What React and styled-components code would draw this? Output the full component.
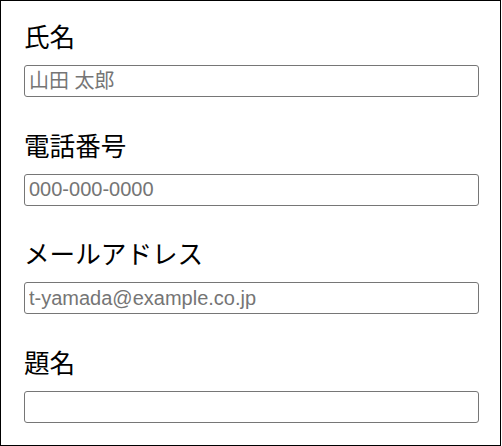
import React from "react";
import styled, { createGlobalStyle } from "styled-components";

const GlobalStyle = createGlobalStyle`
    html, body {
        margin: 0;
        padding: 0;
        background: #fff;
    }
`;

const Form = styled.form`
    box-sizing: border-box;
    width: 501px;
    height: 446px;
    border: 1px solid #000;
    padding: 19px 21px 0 23px;
    display: flex;
    flex-direction: column;
    gap: 31.67px;
    font-family: "Noto Sans CJK JP", "Liberation Sans", sans-serif;
`;

const Field = styled.div`
    display: flex;
    flex-direction: column;
    gap: 13px;
`;

const Label = styled.label`
    display: block;
    font-size: 25.6px;
    line-height: 32px;
    color: #000;
`;

const Input = styled.input`
    box-sizing: border-box;
    width: 100%;
    height: 32px;
    margin: 0;
    padding: 0 4px;
    border: 1px solid #767676;
    border-radius: 3px;
    background: #fff;
    font-family: "Liberation Sans", "Noto Sans CJK JP", sans-serif;
    font-size: 20px;
    color: #000;
    outline: none;

    &::placeholder {
        color: #757575;
        opacity: 1;
    }
`;

const fields = [
    { id: "name", label: "氏名", type: "text", placeholder: "山田 太郎" },
    { id: "tel", label: "電話番号", type: "tel", placeholder: "000-000-0000" },
    { id: "email", label: "メールアドレス", type: "email", placeholder: "t-yamada@example.co.jp" },
    { id: "subject", label: "題名", type: "text", placeholder: "" },
];

export default function App() {
    return (
        <>
            <GlobalStyle />
            <Form onSubmit={ e => e.preventDefault() }>
                { fields.map( f => (
                    <Field key={ f.id }>
                        <Label htmlFor={ f.id }>{ f.label }</Label>
                        <Input id={ f.id } name={ f.id } type={ f.type } placeholder={ f.placeholder } />
                    </Field>
                ) ) }
            </Form>
        </>
    );
}
